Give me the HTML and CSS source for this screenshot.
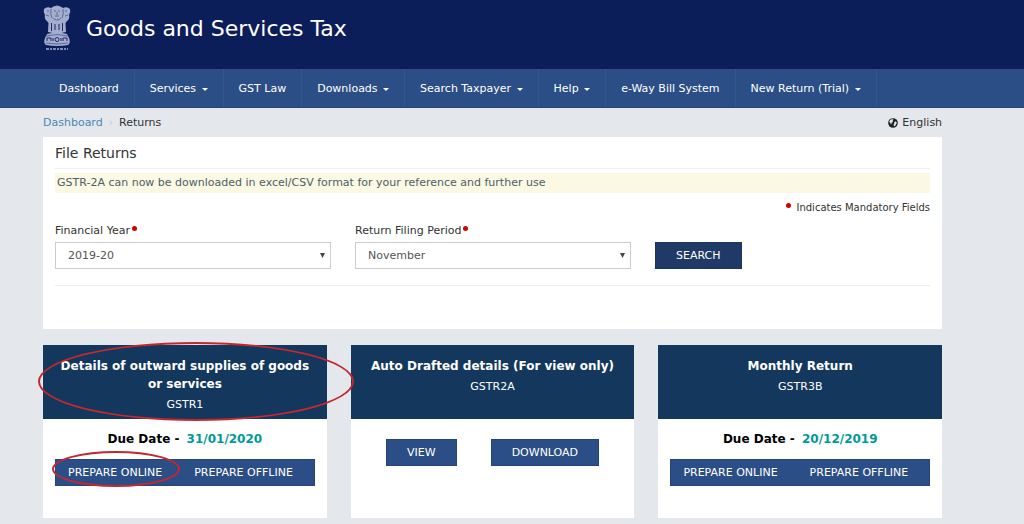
FILE: index.html
```html
<!DOCTYPE html>
<html lang="en">
<head>
    <meta charset="UTF-8">
    <title>Goods and Services Tax</title>
    <link rel="stylesheet" href="styles.css">
</head>
<body>

    <header class="header">
        <svg class="emblem" viewBox="0 0 28 46" aria-hidden="true">
            <g fill="#a4adcd">
                <path d="M8 3 Q10 1 14 0.500 Q18 1 20 3 Q24 1 27 4 Q28 7 26 10 Q27 14 24 16 L22.500 18 L23 27 L18.500 28 H9.500 L5 27 L5.500 18 L4 16 Q1 14 2 10 Q0 7 1 4 Q4 1 8 3 Z"/>
                <path d="M4 29 Q14 26 24 29 L26 33 Q28 38 25 40 Q14 42 3 40 Q0 38 2 33 Z"/>
            </g>
            <g fill="none" stroke="#4a588f" stroke-width="0.800">
                <path d="M8 4 Q7 9 9 13 M20 4 Q21 9 19 13 M10 13 Q14 17 18 13 M11 6 H13 M15 6 H17 M14 7 V10 M12 11 H16 M3 10 L6 11 M25 10 L22 11 M4 6 H6 M22 6 H24"/>
                <path d="M3 31 Q14 28 25 31 M3 38 Q14 40 25 38"/>
            </g>
            <g fill="none" stroke="#1d2b66" stroke-width="1">
                <path d="M8.500 18 V26 M12 19 V25 M16 19 V25 M19.500 18 V26"/>
                <circle cx="14" cy="34.500" r="2"/>
                <path d="M4 36 V33 H8 V36 M10 33 V36 M18 33 V36 M20 36 V33 H24 V36"/>
            </g>
            <path d="M3 44 H25" stroke="#7f8bb7" stroke-width="2" stroke-dasharray="3 1 2 1"/>
        </svg>
        <h1 class="title">Goods and Services Tax</h1>
    </header>

    <nav class="nav">
        <a href="#">Dashboard</a>
        <a href="#">Services <span class="caret"></span></a>
        <a href="#">GST Law</a>
        <a href="#">Downloads <span class="caret"></span></a>
        <a href="#">Search Taxpayer <span class="caret"></span></a>
        <a href="#">Help <span class="caret"></span></a>
        <a href="#">e-Way Bill System</a>
        <a href="#">New Return (Trial) <span class="caret"></span></a>
    </nav>

    <main class="container">
        <div class="topline">
            <div class="breadcrumb">
                <a href="#">Dashboard</a>
                <span class="divider">›</span>
                <span>Returns</span>
            </div>
            <a href="#" class="language">
                <svg class="globe" viewBox="0 0 12 12" aria-hidden="true">
                    <circle cx="6" cy="6" r="5.800" fill="#222"/>
                    <path d="M2.500 2.500 L5 1.200 L6.500 2 L5.500 3.500 L6 5 L4 5.500 L4.500 7.500 L3 6.500 L1.500 4.500 Z M7.500 5 L9.500 4 L10.500 6 L9 9 L7.500 10 L6.500 8 L7.500 7 Z" fill="#e4e7eb"/>
                </svg>
                English
            </a>
        </div>

        <section class="panel">
            <h2 class="panel-title">File Returns</h2>
            <p class="notice">GSTR-2A can now be downloaded in excel/CSV format for your reference and further use</p>
            <p class="mandatory"><span class="dot"></span> Indicates Mandatory Fields</p>

            <form class="filters">
                <div class="field">
                    <label for="year">Financial Year<span class="dot"></span></label>
                    <select id="year">
                        <option>2019-20</option>
                    </select>
                </div>
                <div class="field">
                    <label for="period">Return Filing Period<span class="dot"></span></label>
                    <select id="period">
                        <option>November</option>
                    </select>
                </div>
                <button type="button" class="btn btn-search">SEARCH</button>
            </form>
        </section>

        <section class="cards">
            <article class="card">
                <div class="card-head">
                    <h3>Details of outward supplies of goods or services</h3>
                    <p>GSTR1</p>
                    <span class="mark mark-head"></span>
                </div>
                <div class="card-body">
                    <p class="due">Due Date - <span class="date">31/01/2020</span></p>
                    <div class="btn-group">
                        <button type="button" class="btn">PREPARE ONLINE</button>
                        <button type="button" class="btn">PREPARE OFFLINE</button>
                        <span class="mark mark-button"></span>
                    </div>
                </div>
            </article>

            <article class="card">
                <div class="card-head">
                    <h3>Auto Drafted details (For view only)</h3>
                    <p>GSTR2A</p>
                </div>
                <div class="card-body card-actions">
                    <button type="button" class="btn">VIEW</button>
                    <button type="button" class="btn">DOWNLOAD</button>
                </div>
            </article>

            <article class="card">
                <div class="card-head">
                    <h3>Monthly Return</h3>
                    <p>GSTR3B</p>
                </div>
                <div class="card-body">
                    <p class="due">Due Date - <span class="date">20/12/2019</span></p>
                    <div class="btn-group">
                        <button type="button" class="btn">PREPARE ONLINE</button>
                        <button type="button" class="btn">PREPARE OFFLINE</button>
                    </div>
                </div>
            </article>
        </section>
    </main>

</body>
</html>
```
FILE: styles.css
```css
* {
    box-sizing: border-box;
}

body {
    margin: 0;
    background: #e4e7eb;
    color: #333;
    font-family: "DejaVu Sans", Verdana, sans-serif;
    font-size: 11px;
    line-height: 16px;
}

h1, h2, h3, p {
    margin: 0;
    font-weight: normal;
}

a {
    color: inherit;
    text-decoration: none;
}

/* Header */
.header {
    display: flex;
    align-items: flex-start;
    gap: 15px;
    height: 69px;
    padding: 5px 43px;
    background: #0c1e5a;
    color: #fff;
}

.emblem {
    width: 28px;
    height: 46px;
}

.title {
    font-size: 22px;
    line-height: 48px;
}

/* Main menu */
.nav {
    display: flex;
    padding: 0 44px;
    background: #2c4e86;
    border-bottom: 1px solid #264478;
    color: #fff;
}

.nav a {
    padding: 12px 15px 10px;
    border-right: 1px solid #34568e;
    white-space: nowrap;
}

.caret {
    display: inline-block;
    margin-left: 2px;
    border-top: 3px solid #fff;
    border-left: 3px solid transparent;
    border-right: 3px solid transparent;
    vertical-align: middle;
}

/* Page content */
.container {
    padding: 0 8% 6px 43px;
}

.topline {
    display: flex;
    justify-content: space-between;
    padding: 7px 0 6px;
}

.breadcrumb {
    display: flex;
    gap: 6px;
}

.breadcrumb a {
    color: #4a87b8;
}

.divider {
    color: #ccc;
}

.language {
    display: flex;
    align-items: center;
    gap: 4px;
}

.globe {
    width: 10px;
    height: 10px;
}

.panel {
    padding: 4px 12px 43px;
    background: #fff;
}

.panel-title {
    padding: 3px 0 6px;
    border-bottom: 1px solid #eee;
    font-size: 14px;
    line-height: 18px;
}

.notice {
    margin-top: 4px;
    padding: 2px;
    background: #fbf8e3;
    color: #4d6169;
}

.mandatory {
    margin-top: 7px;
    font-size: 10px;
    text-align: right;
}

.dot {
    display: inline-block;
    width: 5px;
    height: 5px;
    margin: 0 2px;
    border-radius: 50%;
    background: #d40000;
    vertical-align: 3px;
}

.filters {
    display: flex;
    align-items: flex-end;
    gap: 24px;
    padding: 7px 0 16px;
    border-bottom: 1px solid #eee;
}

.field {
    display: flex;
    flex: 0 1 276px;
    flex-direction: column;
    gap: 3px;
}

.field select {
    appearance: none;
    height: 27px;
    padding: 0 12px;
    border: 1px solid #ccc;
    border-radius: 0;
    background: #fff url("data:image/svg+xml,%3Csvg xmlns='http://www.w3.org/2000/svg' width='5' height='5'%3E%3Cpath d='M0 0h5L2.500 5z' fill='%23444'/%3E%3C/svg%3E") no-repeat right 5px center;
    color: #555;
    font: inherit;
}

/* Buttons */
.btn {
    height: 27px;
    padding: 0 20px;
    border: 1px solid #24447c;
    background: #2c4e86;
    color: #fff;
    font: inherit;
    white-space: nowrap;
    cursor: pointer;
}

.btn-search {
    border-color: #1c3560;
    background: #1f3a66;
}

/* Return cards */
.cards {
    display: grid;
    grid-template-columns: repeat(3, 1fr);
    gap: 24px;
    margin-top: 16px;
}

.card {
    background: #fff;
    text-align: center;
}

.card-head {
    position: relative;
    min-height: 74px;
    padding: 12px 12px 5px;
    background: #14375d;
    color: #fff;
}

.card-head h3 {
    font-size: 12px;
    font-weight: bold;
    line-height: 18px;
}

.card-head p {
    margin-top: 4px;
}

.card-body {
    padding: 12px 12px 32px;
}

.due {
    margin-bottom: 12px;
    color: #000;
    font-size: 12px;
    font-weight: bold;
}

.date {
    margin-left: 3px;
    color: #099;
}

.btn-group {
    position: relative;
    display: flex;
    background: #2c4e86;
    border: 1px solid #24447c;
}

.btn-group .btn {
    height: 25px;
    padding: 0 20px 0 12px;
    border: 0;
}

.card-actions {
    display: flex;
    justify-content: center;
    gap: 34px;
    padding-top: 20px;
}

/* Hand drawn red rings over the first card */
.mark {
    position: absolute;
    z-index: 1;
    border: 2px solid #c4282f;
    border-radius: 50%;
    pointer-events: none;
}

.mark-head {
    inset: -3px -27px -2px -5px;
}

.mark-button {
    top: -9px;
    left: -4px;
    width: 128px;
    height: 36px;
}
```
